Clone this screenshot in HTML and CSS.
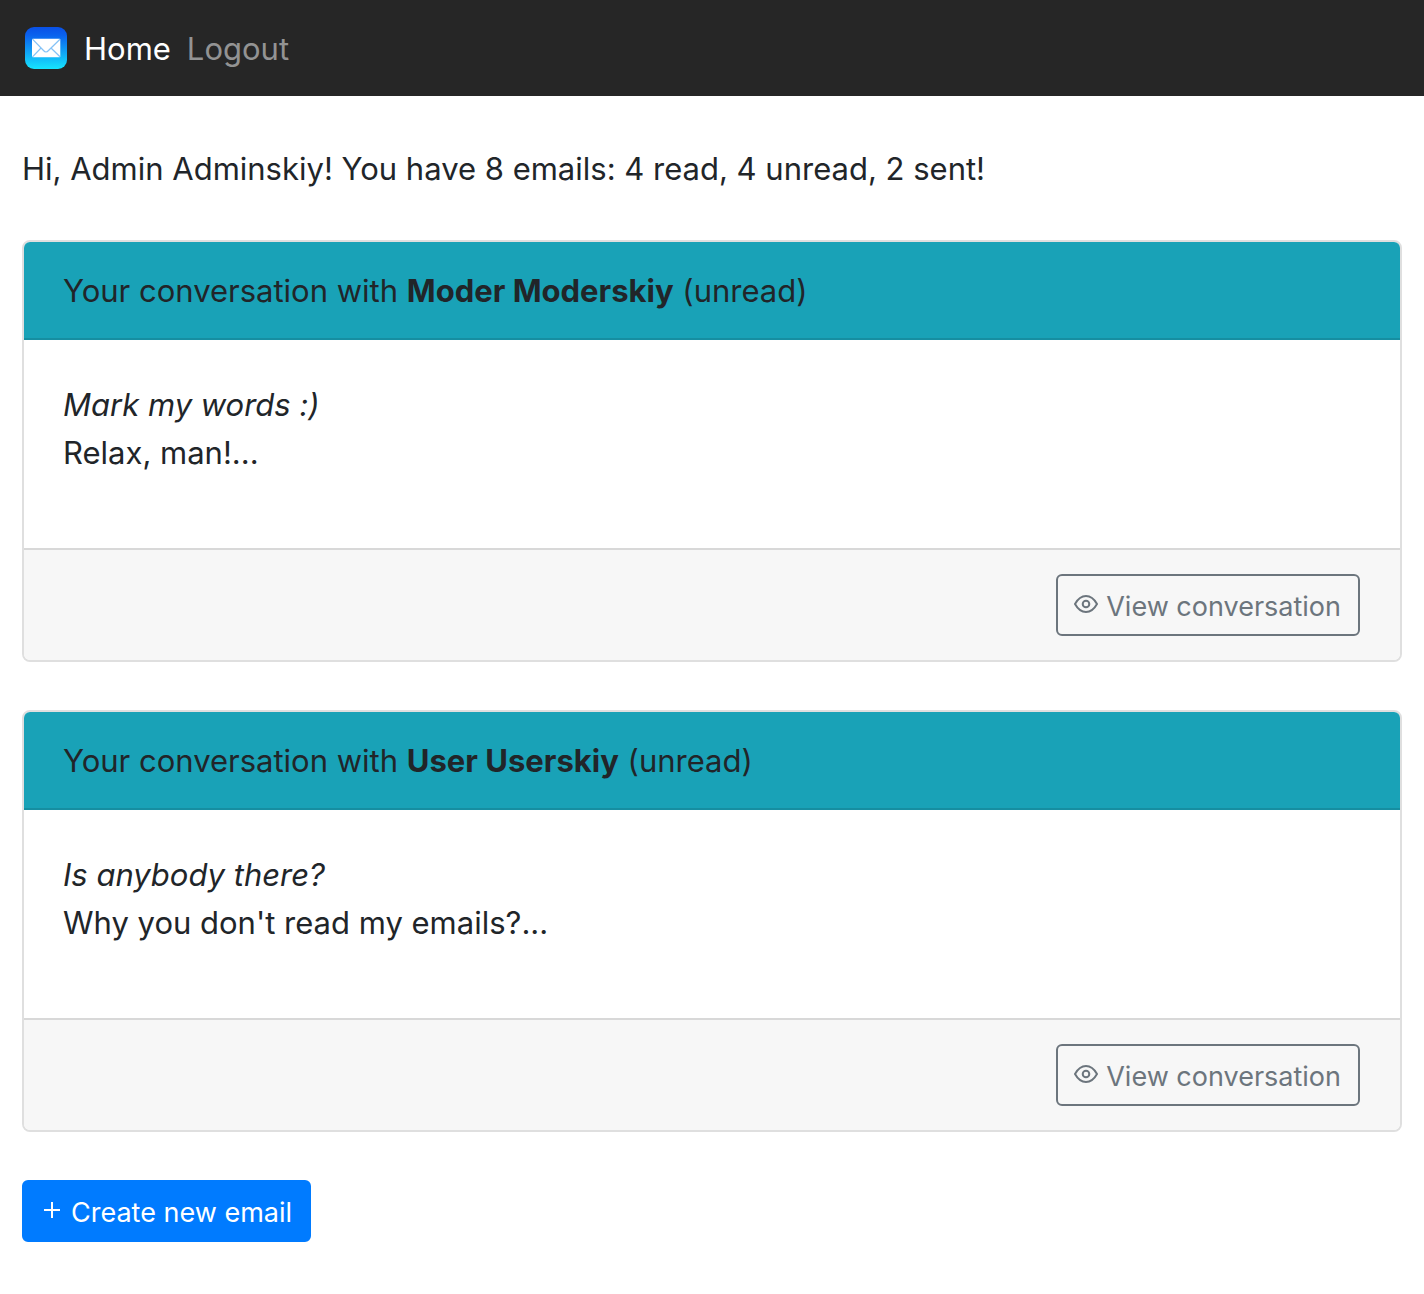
FILE: index.html
```html
<!DOCTYPE html>
<html lang="en">
<head>
<meta charset="utf-8">
<meta name="viewport" content="width=device-width, initial-scale=1">
<title>Home</title>
<link rel="stylesheet" href="styles.css">
</head>
<body>
<nav class="navbar">
  <a class="brand" href="#" aria-label="Mail">
    <svg class="logo" viewBox="0 0 42 42" aria-hidden="true">
      <defs>
        <linearGradient id="sky" x1="0" y1="0" x2="0" y2="1">
          <stop offset="0" stop-color="#0a50e6"/>
          <stop offset="0.2" stop-color="#0a62ee"/>
          <stop offset="1" stop-color="#16e4fd"/>
        </linearGradient>
      </defs>
      <rect width="42" height="42" rx="9" fill="url(#sky)"/>
      <rect x="7" y="11.700" width="28.300" height="18.600" rx="1" fill="#fff"/>
      <path d="M7.500 12.200L18.500 23.500Q21 26.500 23.500 23.500L35 12.200M7.500 29.800L16 21M35 29.800L26 21" fill="none" stroke="#84c2f6" stroke-width="1.200"/>
    </svg>
  </a>
  <a class="nav-link nav-link-active" href="#">Home</a>
  <a class="nav-link" href="#">Logout</a>
</nav>
<main class="content">
  <p class="greeting">Hi, Admin Adminskiy! You have 8 emails: 4 read, 4 unread, 2 sent!</p>
  <article class="card">
    <header class="card-header">Your conversation with <strong>Moder Moderskiy</strong> (unread)</header>
    <div class="card-body">
      <em>Mark my words :)</em>
      <p class="message">Relax, man!...</p>
    </div>
    <footer class="card-footer">
      <a class="btn btn-outline" href="#"><svg class="icon-eye" viewBox="0 0 24 18" aria-hidden="true"><path d="M1 9C3.500 4.500 7.500 1 12 1S20.500 4.500 23 9C20.500 13.500 16.500 17 12 17S3.500 13.500 1 9Z"/><circle cx="12" cy="9" r="3.300"/></svg>View conversation</a>
    </footer>
  </article>
  <article class="card">
    <header class="card-header">Your conversation with <strong>User Userskiy</strong> (unread)</header>
    <div class="card-body">
      <em>Is anybody there?</em>
      <p class="message">Why you don't read my emails?...</p>
    </div>
    <footer class="card-footer">
      <a class="btn btn-outline" href="#"><svg class="icon-eye" viewBox="0 0 24 18" aria-hidden="true"><path d="M1 9C3.500 4.500 7.500 1 12 1S20.500 4.500 23 9C20.500 13.500 16.500 17 12 17S3.500 13.500 1 9Z"/><circle cx="12" cy="9" r="3.300"/></svg>View conversation</a>
    </footer>
  </article>
  <a class="btn btn-primary" href="#"><svg class="icon-plus" viewBox="0 0 16 16" aria-hidden="true"><path d="M8 0V16M0 8H16"/></svg>Create new email</a>
</main>
</body>
</html>
```
FILE: styles.css
```css
* {
  box-sizing: border-box;
}

body {
  margin: 0;
  background: #fff;
  color: #212529;
  font-family: Inter, "Liberation Sans", sans-serif;
  font-size: 31px;
  line-height: 48px;
}

p {
  margin: 0;
}

a {
  text-decoration: none;
}

.navbar {
  display: flex;
  align-items: center;
  gap: 16px;
  padding: 24px;
  background: #262626;
}

.brand {
  display: flex;
  padding: 0 1px;
}

.logo {
  width: 42px;
  height: 42px;
}

.nav-link {
  padding-top: 2px;
  line-height: 46px;
  color: #939393;
}

.nav-link-active {
  color: #fff;
}

.navbar {
  min-height: 96px;
}

.content {
  display: flex;
  flex-direction: column;
  align-items: flex-start;
  gap: 48px;
  padding: 48px 22px;
}

.greeting {
  padding-top: 2px;
  line-height: 46px;
}

.card {
  align-self: stretch;
  overflow: hidden;
  border: 2px solid #dfdfdf;
  border-radius: 8px;
}

.card-header {
  padding: 25px 39px 23px;
  border-bottom: 2px solid #168ea1;
  background: #19a2b7;
}

.card-body {
  padding: 41px 39px 71px;
}

.card-footer {
  display: flex;
  justify-content: flex-end;
  padding: 24px 40px;
  border-top: 2px solid #d8d8d8;
  background: #f7f7f7;
}

.btn {
  display: inline-flex;
  align-items: center;
  padding: 10px 17px 6px 16px;
  border: 2px solid;
  border-radius: 6px;
  font-size: 27px;
  line-height: 42px;
}

.btn-outline {
  gap: 8px;
  border-color: #6c757d;
  color: #6c757d;
}

.btn-primary {
  gap: 11px;
  padding-left: 20px;
  border-color: #007bff;
  background: #007bff;
  color: #fff;
}

.icon-eye,
.icon-plus {
  margin-bottom: 6px;
  fill: none;
  stroke: currentColor;
  stroke-width: 2;
}

.icon-eye {
  width: 24px;
  height: 18px;
}

.icon-plus {
  width: 16px;
  height: 16px;
}
```
